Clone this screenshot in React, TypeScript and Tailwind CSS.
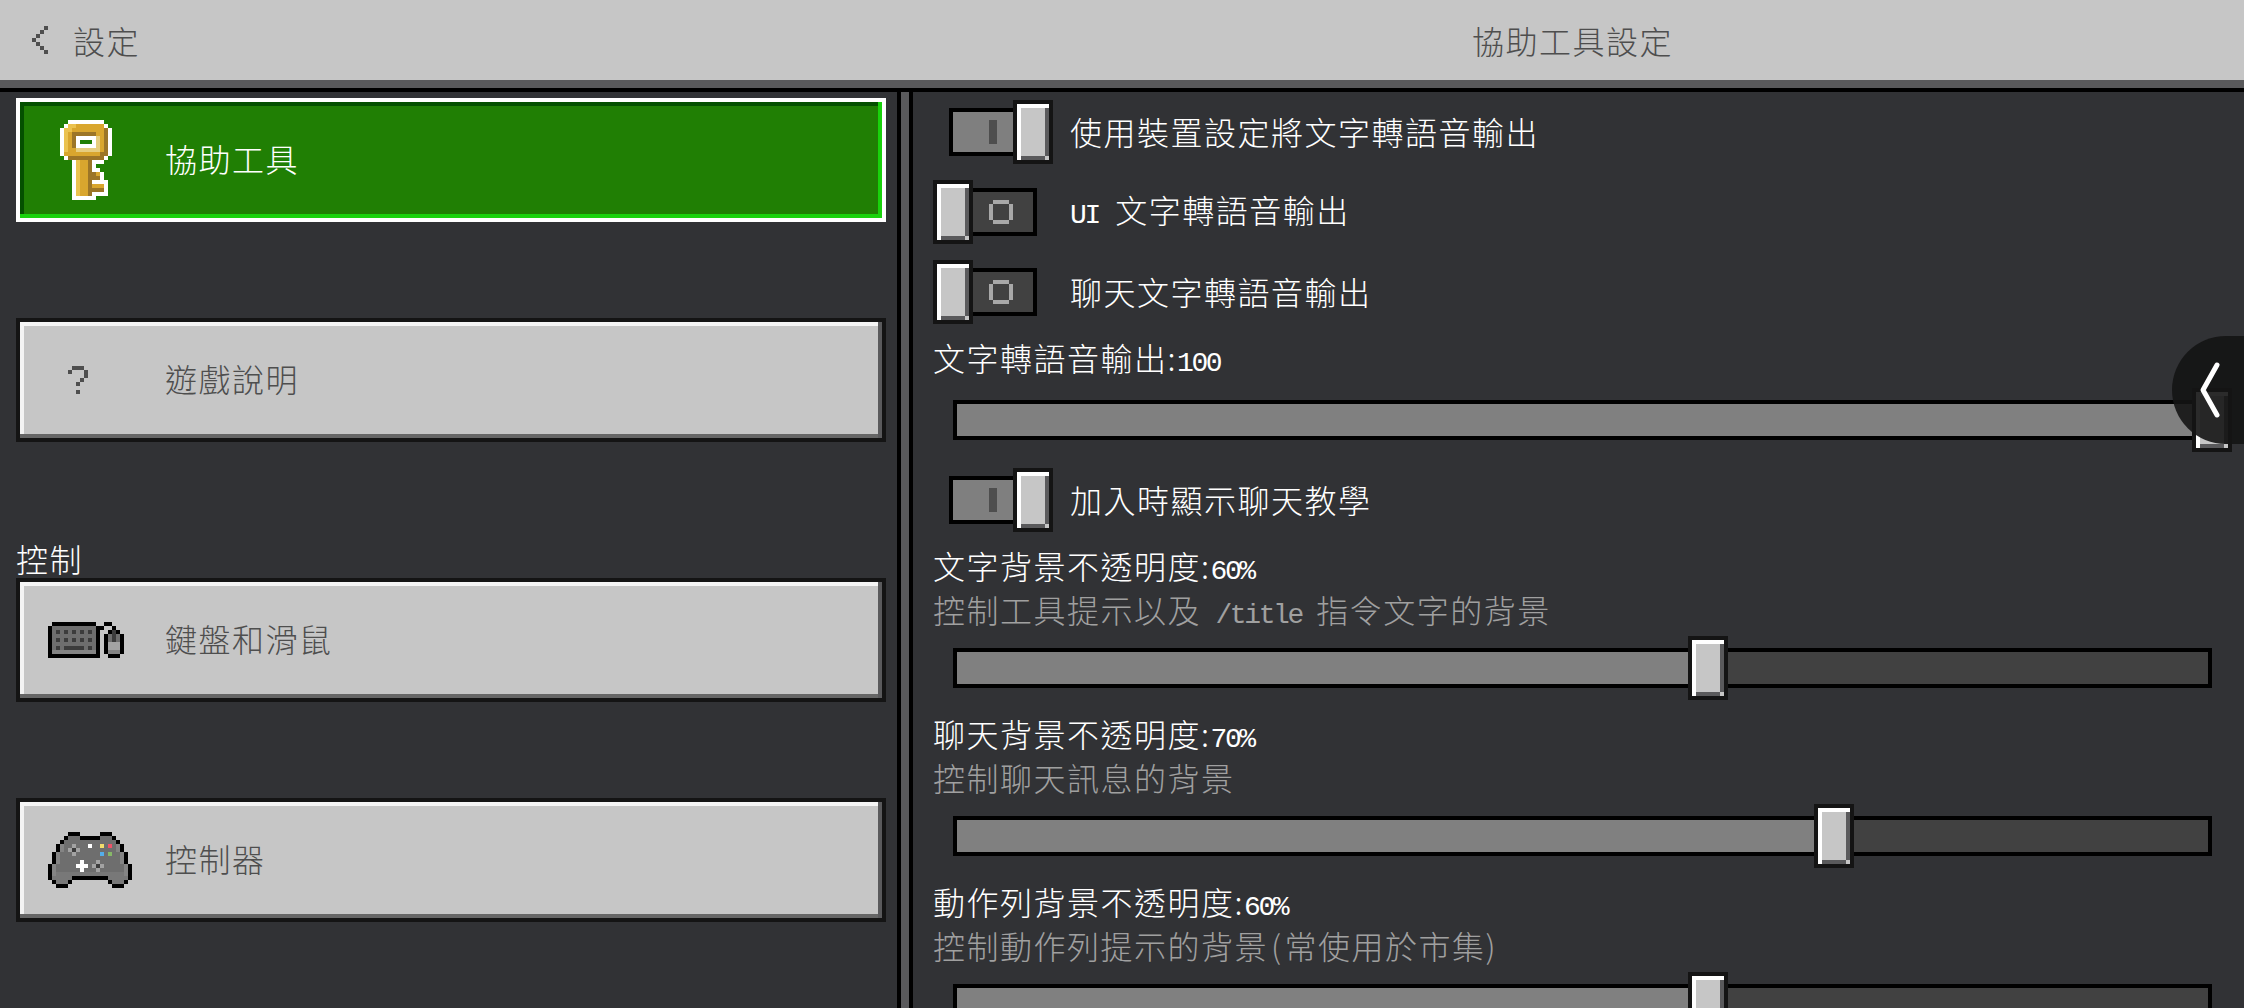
import type { ReactNode } from "react";

const pixelColors: Record<string, string> = {
    W: "#ffffff",
    L: "#ebc24f",
    G: "#d9a62e",
    D: "#9c7527",
    P: "#e6cd7e",
    e: "#217f05",
    B: "#000000",
    g: "#6e6e6e",
    l: "#848484",
    m: "#787878",
    d: "#3c3c3c",
    a: "#a3a3a3",
    Y: "#f2dd6c",
    R: "#ee5268",
    S: "#54aeea",
    N: "#87b868",
    k: "#4e4e4e",
    o: "#a8a8a8",
};

const keyIcon = [
    "..WWWWWWWWW..",
    ".WLLGGGGGGGW.",
    "WLLGGGGGGGGDW",
    "WLGDDDDDDGGDW",
    "WLGDWWWWWPGDW",
    "WLGDWeeeWPGDW",
    "WLGDWWWWWPGDW",
    "WLGGPPPPPPGDW",
    "WGGGGGGGGGDDW",
    ".WDDDDDDDDDW.",
    "...WLGGDWWW..",
    "...WLGGDW....",
    "...WLGGDWW...",
    "...WLGGDDGW..",
    "...WLGGDDDW..",
    "...WLGGDWWWW.",
    "...WLGGDGGGW.",
    "...WLGGDDDDW.",
    "...WLGGDWWWW.",
    "...WWWWWW....",
];

const keyboardIcon = [
    ".BBBBBBBBBBB..BB...",
    "BgggggggggggBB..B..",
    "BgdgdgdgdgdgB..BdB.",
    "BgggggggggggB.BgdgB",
    "BgdgdgdgdgdgB.BgdgB",
    "BgggggggggggB.BaaaB",
    "BgdgdddddgdgB.BaaaB",
    "BlllllllllllB.BlllB",
    "BBBBBBBBBBBBB..BBB.",
];

const controllerIcon = [
    ".....BBB.....BBB.....",
    "....BgggBBBBBgggB....",
    "...BgggggggggggggB...",
    "..BlggagggWggYgRglB..",
    "..BlgadaggggggggglB..",
    ".BlgggaggggggSgNgglB.",
    ".BlggggggggggggggglB.",
    ".BlgggggWgggaggggglB.",
    "BlgggggWWWgadaggggglB",
    "BlggggggWgggagggggglB",
    "BlmmmmmmmmmmmmmmmmmlB",
    "BmmmmmBBBBBBBBBmmmmmB",
    ".BmmmB.........BmmmB.",
    "..BBB...........BBB..",
];

const questionIcon = [".kkk.", "k...k", "....k", "...k.", "..k..", ".....", "..k.."];

const backIcon = ["...k", "..k.", ".k..", "k...", ".k..", "..k.", "...k"];

const offIcon = [".oooo.", "o....o", "o....o", "o....o", "o....o", ".oooo."];

// draws one of the maps above, one rect per filled cell
function PixelIcon({ rows, cell, className }: { rows: string[]; cell: number; className?: string }) {
    const w = rows[0].length;
    return (
        <svg
            className={className}
            width={w * cell}
            height={rows.length * cell}
            viewBox={`0 0 ${w} ${rows.length}`}
            shapeRendering="crispEdges"
        >
            {rows.map((row, y) =>
                row.split("").map((c, x) =>
                    pixelColors[c] ? <rect key={`${x}-${y}`} x={x} y={y} width={1} height={1} fill={pixelColors[c]} /> : null
                )
            )}
        </svg>
    );
}

function Latin({ children }: { children: ReactNode }) {
    return (
        <span className="font-['Liberation_Mono'] text-[28px] leading-none tracking-[-2.4px] whitespace-pre">{children}</span>
    );
}

function Thumb() {
    return (
        <div className="relative h-16 w-10 border-4 border-[#141414] bg-[#c6c6c6]">
            <div className="absolute inset-x-0 top-0 h-1 bg-white" />
            <div className="absolute inset-y-0 left-0 w-1 bg-white" />
            <div className="absolute bottom-0 inset-x-1 h-1 bg-[#5a5a5c]" />
            <div className="absolute inset-y-1 right-0 w-1 bg-[#5a5a5c]" />
        </div>
    );
}

function Toggle({ on, children }: { on: boolean; children: ReactNode }) {
    return (
        <div className="flex h-20 items-center">
            <div className="flex w-[137px] shrink-0 items-center">
                {on ? (
                    <div className="ml-4 flex items-center">
                        <div className="flex h-12 w-16 items-center border-y-4 border-l-4 border-black bg-[#7f7f7f] pl-[36px]">
                            <div className="h-6 w-2 bg-[#4e4e4e]" />
                        </div>
                        <Thumb />
                    </div>
                ) : (
                    <div className="flex items-center">
                        <Thumb />
                        <div className="flex h-12 w-16 items-center border-y-4 border-r-4 border-black bg-[#414141] pl-4">
                            <PixelIcon rows={offIcon} cell={4} />
                        </div>
                    </div>
                )}
            </div>
            <div className="pb-[2px] text-white">{children}</div>
        </div>
    );
}

function Slider({ label, desc, value }: { label: ReactNode; desc?: ReactNode; value: number }) {
    return (
        <div className="pt-3 pb-2">
            <div className="mb-3 h-8 leading-[26px] text-white">{label}</div>
            {desc && <div className="mb-2 h-8 leading-[26px] text-[#a0a0a0]">{desc}</div>}
            <div className="relative ml-5 flex h-16 w-[1259px] items-center">
                <div className="h-10 w-full border-4 border-black bg-[#414141]">
                    <div className="h-full bg-[#808080]" style={{ width: `${value}%` }} />
                </div>
                <div className="absolute top-0 -ml-5" style={{ left: `${value}%` }}>
                    <Thumb />
                </div>
            </div>
        </div>
    );
}

function MenuButton({ icon, label, selected }: { icon: ReactNode; label: string; selected?: boolean }) {
    return (
        <div
            className={`relative flex h-[124px] items-center border-4 ${
                selected ? "border-white bg-[#207f04] text-white" : "border-[#141414] bg-[#c6c6c6] text-[#4e4e4e]"
            }`}
        >
            <div className={`absolute inset-x-0 top-0 h-1 ${selected ? "bg-[#045000]" : "bg-[#f4f4f4]"}`} />
            <div className={`absolute inset-y-0 left-0 w-1 ${selected ? "bg-[#045000]" : "bg-[#f4f4f4]"}`} />
            <div className={`absolute inset-x-0 bottom-0 h-1 ${selected ? "bg-[#19d20c]" : "bg-[#666666]"}`} />
            <div className={`absolute inset-y-0 right-0 w-1 ${selected ? "bg-[#19d20c]" : "bg-[#5a5a5c]"}`} />
            <div className="flex w-[145px] shrink-0">{icon}</div>
            <span className="pb-1">{label}</span>
        </div>
    );
}

export default function App() {
    return (
        <div className="flex h-[1008px] w-[2244px] flex-col overflow-hidden bg-[#313235] font-['Noto_Sans_CJK_TC',sans-serif] text-[32px] leading-8 font-light tracking-[1.5px]">
            {/* header */}
            <div className="flex h-20 shrink-0 items-center bg-[#c6c6c6] text-[#4e4e4e]">
                <div className="flex w-[901px] items-center pl-8">
                    <PixelIcon rows={backIcon} cell={4} className="mr-[25px]" />
                    <span>設定</span>
                </div>
                <div className="flex-1 text-center">協助工具設定</div>
            </div>
            <div className="h-2 shrink-0 bg-[#5a5a5c]" />
            <div className="h-1 shrink-0 bg-black" />

            <div className="flex min-h-0 flex-1">
                {/* left menu */}
                <div className="flex w-[897px] shrink-0 flex-col px-4 pt-[6px] pr-[11px]">
                    <MenuButton selected label="協助工具" icon={<PixelIcon rows={keyIcon} cell={4} className="ml-10" />} />
                    <div className="mt-24">
                        <MenuButton label="遊戲說明" icon={<PixelIcon rows={questionIcon} cell={4} className="ml-12" />} />
                    </div>
                    <div className="mt-[104px] h-8 leading-6 text-white">控制</div>
                    <MenuButton label="鍵盤和滑鼠" icon={<PixelIcon rows={keyboardIcon} cell={4} className="ml-7" />} />
                    <div className="mt-24">
                        <MenuButton label="控制器" icon={<PixelIcon rows={controllerIcon} cell={4} className="ml-7" />} />
                    </div>
                </div>
                <div className="w-1 shrink-0 bg-black" />
                <div className="w-2 shrink-0 bg-[#5a5a5c]" />
                <div className="w-1 shrink-0 bg-black" />

                {/* settings list */}
                <div className="min-w-0 flex-1 overflow-hidden pl-5">
                    <Toggle on>使用裝置設定將文字轉語音輸出</Toggle>
                    <Toggle on={false}>
                        <Latin>UI </Latin>
                        <span className="ml-[2px]">文字轉語音輸出</span>
                    </Toggle>
                    <Toggle on={false}>聊天文字轉語音輸出</Toggle>
                    <Slider label={<>文字轉語音輸出:<Latin>100</Latin></>} value={100} />
                    <Toggle on>加入時顯示聊天教學</Toggle>
                    <Slider
                        label={<>文字背景不透明度:<Latin>60%</Latin></>}
                        desc={<>控制工具提示以及<Latin> /title </Latin>指令文字的背景</>}
                        value={60}
                    />
                    <Slider label={<>聊天背景不透明度:<Latin>70%</Latin></>} desc="控制聊天訊息的背景" value={70} />
                    <Slider
                        label={<>動作列背景不透明度:<Latin>60%</Latin></>}
                        desc={<>控制動作列提示的背景<span className="ml-[3px] mr-[2px]">(</span>常使用於市集)</>}
                        value={60}
                    />
                </div>
            </div>

            {/* floating side tab */}
            <div className="fixed top-[336px] right-0 flex h-[108px] w-[72px] items-center rounded-l-[54px] bg-[#141414]/90">
                <svg className="ml-[26px]" width="24" height="60" viewBox="0 0 24 60">
                    <path d="M19 5 L5 30 L19 55" fill="none" stroke="white" strokeWidth="5" strokeLinecap="round" strokeLinejoin="round" />
                </svg>
            </div>
        </div>
    );
}
